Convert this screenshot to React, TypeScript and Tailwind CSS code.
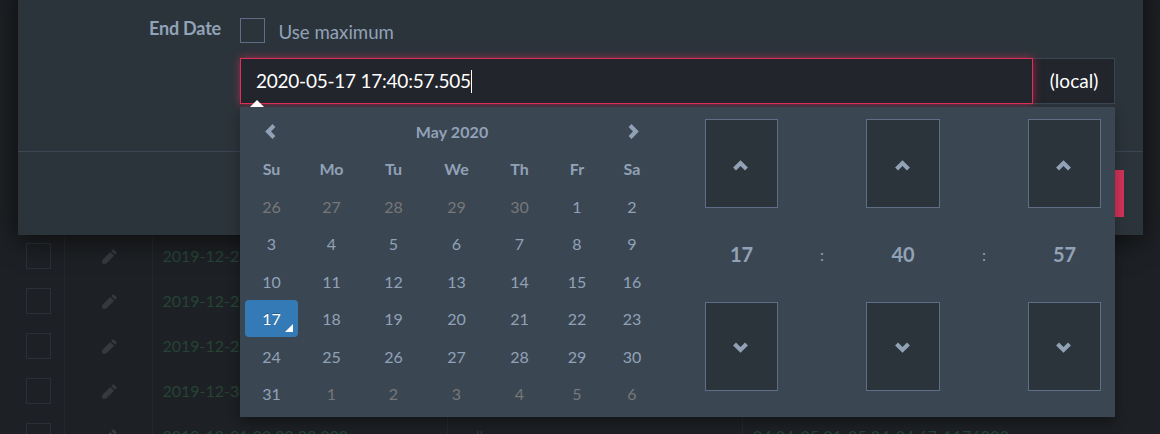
import React from "react";

const WEEKDAYS = ["Su", "Mo", "Tu", "We", "Th", "Fr", "Sa"];
const DAYS = [
  26, 27, 28, 29, 30, 1, 2, 3, 4, 5, 6, 7, 8, 9, 10, 11, 12, 13, 14, 15, 16, 17, 18, 19, 20, 21, 22,
  23, 24, 25, 26, 27, 28, 29, 30, 31, 1, 2, 3, 4, 5, 6,
];
const ROWS = [
  "2019-12-28",
  "2019-12-29",
  "2019-12-29",
  "2019-12-30",
  "2019-12-31 00:00:00.000",
];

function Chevron({ className }: { className: string }) {
  return (
    <svg className={className} width="15" height="11" viewBox="0 0 15 11" fill="currentColor">
      <path d="M7.5 0.2 14.9 7.5 12 10.4 7.5 6 3 10.4 0.1 7.5Z" />
    </svg>
  );
}

function Pencil() {
  return (
    <svg width="15" height="15" viewBox="0 0 15 15" fill="#36393e">
      <path d="M0.2 14.8V11L8.3 2.9 12.1 6.7 4 14.8ZM9.2 2 10.8 0.4Q11.3 0 11.8 0.4L14.6 3.2Q15 3.7 14.6 4.2L13 5.8Z" />
    </svg>
  );
}

function TimeUnit({ value }: { value: string }) {
  const button =
    "flex h-[89px] items-center justify-center border border-[#5f6d87] bg-[#2c343b]";
  return (
    <div className="flex flex-col">
      <button className={button}>
        <Chevron className="mt-[3px] mr-[2px]" />
      </button>
      <div className="flex h-[94px] items-center justify-center pb-[2px] text-[20px] font-bold">
        {value}
      </div>
      <button className={button}>
        <Chevron className="mt-px mr-[2px] rotate-180" />
      </button>
    </div>
  );
}

function Colon() {
  return <div className="flex items-center justify-center text-base">:</div>;
}

function Picker() {
  return (
    <div className="absolute top-[107px] left-[240px] z-20 flex h-[310px] w-[875px] bg-[#3b4653] text-[#91a2b7] shadow-[0_6px_12px_rgba(0,0,0,0.3)]">
      <div className="absolute -top-[7px] left-[10px] h-0 w-0 border-x-[7px] border-b-[7px] border-x-transparent border-b-white" />
      <div className="w-[418px] shrink-0 pt-[6px] pl-[5px]">
        <div className="flex h-[37.5px] items-center text-base font-bold">
          <div className="flex w-[53px] justify-center">
            <Chevron className="mr-[2px] -rotate-90" />
          </div>
          <div className="w-[308px] text-center tracking-[0.1px]">May 2020</div>
          <div className="flex w-[52px] justify-center">
            <Chevron className="ml-[3px] rotate-90" />
          </div>
        </div>
        <div className="grid auto-rows-[37.5px] grid-cols-[53px_67px_57px_69px_57px_58px_52px] text-base">
          {WEEKDAYS.map((d) => (
            <div key={d} className="flex items-center justify-center font-bold">
              {d}
            </div>
          ))}
          {DAYS.map((d, i) => {
            if (i === 21)
              return (
                <div
                  key={i}
                  className="relative -mt-[0.6px] flex h-[37px] items-center justify-center rounded-[4px] bg-[#337ab7] pt-px text-white [text-shadow:0_-1px_0_rgba(0,0,0,0.25)]"
                >
                  {d}
                  <span className="absolute right-[5px] bottom-[5px] h-0 w-0 border-b-[8px] border-l-[8px] border-b-white border-l-transparent" />
                </div>
              );
            return (
              <div
                key={i}
                className={
                  i < 5 || i > 35
                    ? "flex items-center justify-center text-[#777777]"
                    : "flex items-center justify-center"
                }
              >
                {d}
              </div>
            );
          })}
        </div>
      </div>
      <div className="ml-[47px] grid h-[284px] grid-cols-[73px_88px_74px_88px_73px] pt-[12px]">
        <TimeUnit value="17" />
        <Colon />
        <TimeUnit value="40" />
        <Colon />
        <TimeUnit value="57" />
      </div>
    </div>
  );
}

export default function App() {
  return (
    <div className="relative h-[434px] w-[1160px] overflow-hidden bg-[#1d2024] font-['Lato',sans-serif]">
      <div className="ml-[17px] pt-[233px]">
        {ROWS.map((date, i) => (
          <div key={i} className="flex h-[45px] items-stretch text-base text-[#254434]">
            <div className="flex w-[48px] items-center border-r border-[#24272c] pl-[9px]">
              <div className="h-[26px] w-[25px] border border-[#2b2f36]" />
            </div>
            <div className="flex w-[88px] items-center justify-center border-r border-[#24272c] pt-[2px] pl-px">
              <Pencil />
            </div>
            <div className="flex w-[295px] items-center border-r border-[#24272c] pt-px pl-[9.5px]">
              {date}
            </div>
            <div className="flex w-[295px] items-center border-r border-[#24272c] pl-[10px] text-[#33363e]">
              {i === 4 ? "null" : ""}
            </div>
            <div className="flex items-center pl-[10px] tracking-[0.12px]">
              {i === 4 ? "04.04-05.01-05.04-04.67-1176000" : ""}
            </div>
          </div>
        ))}
      </div>

      <div className="absolute -top-[20px] left-[18px] h-[255px] w-[1125px] bg-[#2c343b] shadow-[0_5px_25px_rgba(0,0,0,0.6)]">
        <div className="flex h-[172px] border-b border-[#3b4653] pt-[37px]">
          <div className="w-[203px] text-right text-[18px] leading-[22px] font-bold tracking-[-0.2px] text-[#91a2b7]">
            End Date
          </div>
          <div className="ml-[19px] w-[875px]">
            <div className="flex h-[27px] items-center">
              <div className="h-[25px] w-[25px] border border-[#5f6d87]" />
              <span className="ml-[13.5px] pt-[2px] text-[18.67px] leading-[22px] text-[#91a2b7]">
                Use maximum
              </span>
            </div>
            <div className="mt-[14px] flex h-[46px] text-[19px] text-white">
              <div className="relative z-10 flex w-[793px] items-center border border-[#df2f59] bg-[#22252c] pl-[15px] tracking-[-0.24px] shadow-[0_0_8px_rgba(223,47,89,0.6)]">
                2020-05-17 17:40:57.505
                <span className="h-[23px] w-px bg-white" />
              </div>
              <div className="flex w-[82px] items-center justify-center border border-l-0 border-[#3b4653] bg-[#22252c] pl-px">
                (local)
              </div>
            </div>
          </div>
        </div>
        <div className="flex justify-end pt-[18px] pr-[19px]">
          <div className="h-[47px] w-[100px] bg-[#d43259]" />
        </div>
      </div>

      <Picker />
    </div>
  );
}
